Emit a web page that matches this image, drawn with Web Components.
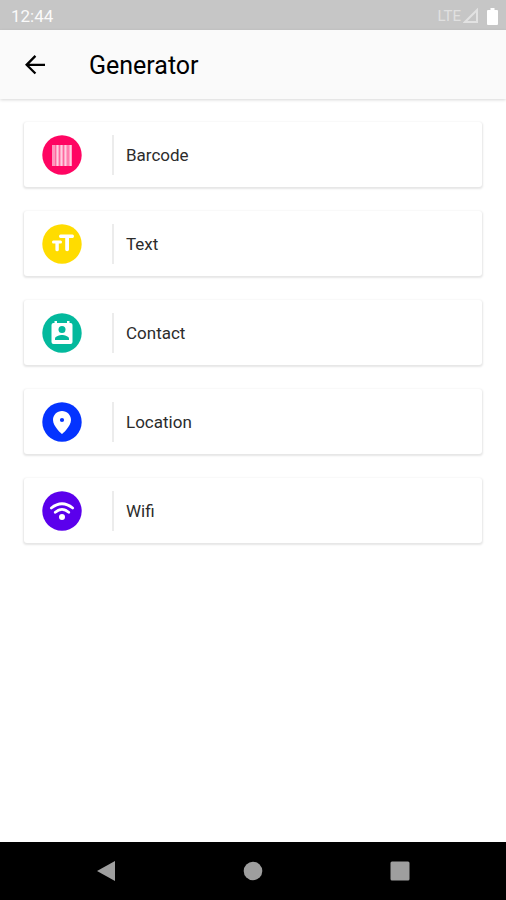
<!DOCTYPE html>
<html lang="en">
<head>
<meta charset="utf-8">
<meta name="viewport" content="width=device-width, initial-scale=1">
<title>Generator</title>
<style>
html, body { margin: 0; height: 100%; }
body { font-family: Roboto, "Liberation Sans", sans-serif; background: #fff; }
</style>
</head>
<body>
<generator-app></generator-app>
<script>
class BaseElement extends HTMLElement {
  connectedCallback() {
    if (this.shadowRoot) return;
    this.attachShadow({ mode: "open" }).innerHTML = this.render();
  }
}

customElements.define("status-bar", class extends BaseElement {
  render() {
    return `<style>
      :host { display: flex; align-items: center; justify-content: space-between; height: 30px; padding: 2px 8px 0 11px; background: #c6c6c6; box-sizing: border-box; color: #fafafa; font-size: 17px; line-height: 20px; }
      .side { display: flex; align-items: center; color: #e0e0e0; font-size: 15px; }
      svg { display: block; }
      .signal { margin-left: 2px; }
      .battery { margin-left: 8px; }
    </style>
    <span>12:44</span>
    <span class="side"><span>LTE</span>
      <svg class="signal" width="16" height="16" viewBox="0 0 16 16"><path d="M14 2v12H2z" fill="none" stroke="#e2e2e2" stroke-width="2"/></svg>
      <svg class="battery" width="11" height="17" viewBox="0 0 11 17"><path d="M3.500 0h4v2H10q1 0 1 1v13q0 1-1 1H1q-1 0-1-1V3q0-1 1-1h2.500z" fill="#fff"/></svg>
    </span>`;
  }
});

customElements.define("app-header", class extends BaseElement {
  render() {
    return `<style>
      :host { display: flex; align-items: center; height: 69px; padding: 0 20px; background: #fafafa; box-shadow: 0 1px 3px #00000028; box-sizing: border-box; color: #000; }
      button { border: 0; padding: 0; background: none; color: #000; width: 30px; height: 30px; cursor: pointer; }
      svg { display: block; }
      h1 { margin: 2px 0 0 39px; font-size: 25px; line-height: 32px; font-weight: 400; }
    </style>
    <button aria-label="Back"><svg width="30" height="30" viewBox="0 0 24 24"><path fill="currentColor" d="M20 10.900H7.500l5.500-5.500L11.700 4l-7.700 7.700 7.700 7.700 1.300-1.300-5.500-5.400H20z"/></svg></button>
    <h1><slot></slot></h1>`;
  }
});

const ICONS = {
  barcode: `<rect x="10" y="10" width="20" height="21" fill="#fff" opacity=".58"/><path d="M15.500 10v21M19.500 10v21M23.500 10v21M28.500 10v21" stroke="#fff" stroke-width="1.500" opacity=".55"/><path d="M13.500 10v21M17.500 10v21M21.500 10v21M26 10v21" stroke="#ff0562" stroke-width=".7" opacity=".45"/>`,
  text: `<path fill="#fff" d="M18.500 10.500h12q1.500 0 1.500 1.800t-1.500 1.700H27V25.500q0 1.800-1.900 1.800t-1.900-1.800V14h-4.700q-1.500 0-1.500-1.700t1.500-1.800zM11.300 16.500h7.400q1.300 0 1.300 1.500t-1.300 1.500h-1.900v6.200q0 1.600-1.700 1.600t-1.700-1.600v-6.200h-2.100Q10 19.500 10 18t1.300-1.500z"/>`,
  contact: `<path fill="#fff" d="M12.500 8H15v2h10V8h2.500v2h1q2 0 2 2v17q0 2-2 2h-17q-2 0-2-2V12q0-2 2-2h1z"/><circle cx="20" cy="16.500" r="3.500" fill="#03b99d"/><path fill="#03b99d" d="M13 27v-1.200c0-2.400 4.700-3.700 7-3.700s7 1.300 7 3.700V27z"/>`,
  location: `<path fill="#fff" fill-rule="evenodd" d="M20 9c-5 0-9 3.900-9 8.900C11 24.500 20 32 20 32s9-7.500 9-14.100C29 12.900 25 9 20 9zm0 6.900a2.100 2.100 0 1 1 0 4.200 2.100 2.100 0 0 1 0-4.200z"/>`,
  wifi: `<g fill="none" stroke="#fff" stroke-width="2.800" stroke-linecap="round"><path d="M9.300 17Q20 8.500 30.700 17"/><path d="M13.300 21.300Q20 15.500 26.700 21.300"/></g><circle cx="20" cy="26" r="3" fill="#fff"/>`
};

customElements.define("generator-option", class extends BaseElement {
  render() {
    return `<style>
      :host { display: block; }
      button { display: flex; align-items: center; width: 100%; height: 65px; padding: 0 18px; border: 0; border-radius: 3px; background: #fff; box-shadow: 0 1px 2px 1px #0000001a; box-sizing: border-box; text-align: left; font: inherit; font-size: 17px; line-height: 24px; color: #2c2c2c; cursor: pointer; }
      svg { display: block; flex: none; }
      .rule { width: 2px; height: 40px; margin: 0 12px 0 30px; background: #ececec; }
    </style>
    <button><svg width="40" height="40" viewBox="0 0 40 40" aria-hidden="true"><circle cx="20" cy="20" r="19.700" fill="${this.getAttribute("color")}"/>${ICONS[this.getAttribute("icon")]}</svg><span class="rule"></span><slot></slot></button>`;
  }
});

customElements.define("navigation-bar", class extends BaseElement {
  render() {
    return `<style>
      :host { display: flex; justify-content: center; height: 58px; background: #000; }
      button { flex: 0 0 29%; display: grid; place-items: center; border: 0; padding: 0; background: none; cursor: pointer; }
      svg { display: block; fill: #9e9e9e; }
    </style>
    <button aria-label="Back"><svg width="20" height="22" viewBox="0 0 20 22"><path d="M19 1v20L1 11z"/></svg></button>
    <button aria-label="Home"><svg width="20" height="20" viewBox="0 0 20 20"><circle cx="10" cy="10" r="9.300"/></svg></button>
    <button aria-label="Overview"><svg width="20" height="20" viewBox="0 0 20 20"><rect x=".5" y=".5" width="19" height="19" rx="1.500"/></svg></button>`;
  }
});

customElements.define("generator-app", class extends BaseElement {
  render() {
    return `<style>
      :host { display: flex; flex-direction: column; min-height: 100vh; }
      main { flex: 1; display: flex; flex-direction: column; gap: 24px; padding: 23px 24px 24px; }
    </style>
    <status-bar></status-bar>
    <app-header>Generator</app-header>
    <main>
      <generator-option icon="barcode" color="#ff0562">Barcode</generator-option>
      <generator-option icon="text" color="#ffdc00">Text</generator-option>
      <generator-option icon="contact" color="#03b99d">Contact</generator-option>
      <generator-option icon="location" color="#0433ff">Location</generator-option>
      <generator-option icon="wifi" color="#5b00ec">Wifi</generator-option>
    </main>
    <navigation-bar></navigation-bar>`;
  }
});
</script>
</body>
</html>
